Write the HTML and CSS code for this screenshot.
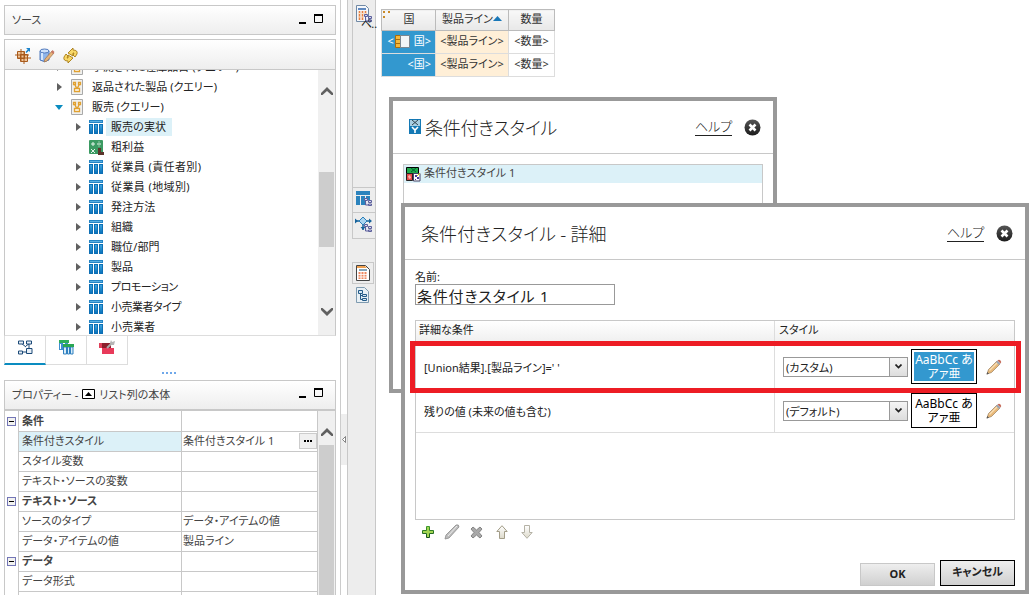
FILE: index.html
```html
<!DOCTYPE html>
<html lang="ja">
<head>
    <meta charset="utf-8">
    <title>条件付きスタイル</title>
    <link rel="stylesheet" href="styles.css">
</head>
<body>
    <!-- shared icons -->
    <svg class="defs" width="0" height="0">
        <defs>
            <linearGradient id="gBlue" x1="0" y1="0" x2="0" y2="1">
                <stop offset="0" stop-color="#3fa4dc"/><stop offset="1" stop-color="#0873bd"/>
            </linearGradient>
            <linearGradient id="gDark" x1="0" y1="0" x2="0" y2="1">
                <stop offset="0" stop-color="#555"/><stop offset="1" stop-color="#1c1c1c"/>
            </linearGradient>
            <linearGradient id="gGreen" x1="0" y1="0" x2="0" y2="1">
                <stop offset="0" stop-color="#3f9a2f"/><stop offset="1" stop-color="#14501c"/>
            </linearGradient>
            <linearGradient id="gArrow" x1="0" y1="0" x2="0" y2="1">
                <stop offset="0" stop-color="#fff"/><stop offset="1" stop-color="#dcd9ca"/>
            </linearGradient>
            <symbol id="table" viewBox="0 0 14 14">
                <rect x=".5" y=".5" width="13" height="2" fill="#5aaee0" stroke="#2385c6"/>
                <path d="M0 4h4v10H0zM5 4h4v10H5zM10 4h4v10h-4z" fill="#0e6fb4"/>
                <path d="M1 5h2v8H1zM6 5h2v8H6zM11 5h2v8h-2z" fill="url(#gBlue)"/>
            </symbol>
            <symbol id="query" viewBox="0 0 12 16">
                <path d="M.5.500h11v15H.5z" fill="#f0f0ee" stroke="#a9a9a9"/>
                <path d="M4 6l1.500 3M8 6L6.500 9" stroke="#e0a030" stroke-width="1.500"/>
                <path d="M2.500 3.500h2v2h-2zM7.500 3.500h2v2h-2zM3.500 9.500h5v3h-5z" fill="#fff" stroke="#e0a030" stroke-width="1.300"/>
            </symbol>
            <symbol id="closeIcon" viewBox="0 0 17 17">
                <circle cx="8.500" cy="8.500" r="8" fill="url(#gDark)"/>
                <path d="M5.500 5.500l6 6M11.500 5.500l-6 6" stroke="#fff" stroke-width="2.600"/>
            </symbol>
            <symbol id="pencil" viewBox="0 0 16 16">
                <path d="M1 15l1.500-4.500L11 2l3 3-8.500 8.500z" fill="#e8b878" stroke="#9a7f60" stroke-width=".7"/>
                <path d="M3.500 11.500L12 3" stroke="#f8dfb5" stroke-width="1.200"/>
                <path d="M10 3l1.500-1.500 3 3L13 6z" fill="#9aa7b5"/>
                <path d="M11.500 1.500Q13 0 14.500 1.500t0 3z" fill="#c66a58"/>
                <path d="M.5 15.500l.8-2.500 1.700 1.700z" fill="#555"/>
            </symbol>
            <symbol id="minmax" viewBox="0 0 25 11">
                <path d="M0 8h7v2H0z"/>
                <path d="M15.500.500h8v8h-8z" fill="none" stroke="#000"/>
                <path d="M15 0h9v2h-9z"/>
            </symbol>
            <symbol id="chevUp" viewBox="0 0 12 8">
                <path d="M0 6l6-6 6 6v2h-1.500L6 4 1.500 8H0z" fill="#606060"/>
            </symbol>
            <symbol id="minus" viewBox="0 0 9 9">
                <rect x=".5" y=".5" width="8" height="8" fill="#f2f2f0" stroke="#7376b6"/>
                <path d="M2 4.500h5" stroke="#000"/>
            </symbol>
            <symbol id="subTree" viewBox="0 0 8 8">
                <path d="M.5.500h3v2h-3zM4.500 2.500h3v2h-3zM4.500 6h3v1.500h-3zM1.500 3v4h3" fill="#d9d9f2" stroke="#5b5f9b"/>
            </symbol>
        </defs>
    </svg>

    <div class="app">
        <div class="side">
            <div class="bar">
                <span class="bar-title src">ソース</span>
                <svg class="minmax" width="25" height="11"><use href="#minmax"/></svg>
            </div>

            <div class="source">
                <div class="tools">
                    <svg width="16" height="16" viewBox="0 0 16 16">
                        <path d="M2.500 3.500h7v7h-7zM5.500 6.500h7v7h-7z" fill="#f0c79c" stroke="#a85a1c"/>
                        <path d="M0 7h14M6 1v12M3 10h13M9 4v12" stroke="#a85a1c" fill="none"/>
                        <path d="M11 0h4v4l-1.200-1.200L11.500 5l-1-1 2.200-2.400z" fill="#1d84cb"/>
                    </svg>
                    <svg width="16" height="16" viewBox="0 0 16 16">
                        <path d="M1 3v9q4 3 9 0V3z" fill="#8fb5ea" stroke="#4f79bd"/>
                        <ellipse cx="5.500" cy="3" rx="4.500" ry="2" fill="#cfe2fb" stroke="#4f79bd"/>
                        <path d="M3 5v7" stroke="#d5e6fb" stroke-width="2"/>
                        <path d="M5 14l1-3 7-8 2 2-7 8z" fill="#e6b47a" stroke="#9b704a" stroke-width=".7"/>
                        <path d="M12 4l1.500-2 2 2L14 6z" fill="#c97866"/>
                    </svg>
                    <svg width="16" height="16" viewBox="0 0 16 16">
                        <path d="M5 5l5-5v2q5 0 4 4l-2 3-2-2 1-2h-1v3z" fill="#f8d867" stroke="#a87c14" stroke-width=".9"/>
                        <path d="M10 10l-5 5v-2q-5 0-4-4l2-3 2 2-1 2h1V7z" fill="#f8d867" stroke="#a87c14" stroke-width=".9"/>
                    </svg>
                </div>
                <div class="tree-wrap">
                    <ul class="tree">
                        <li class="q"><i class="arrow"></i><svg width="12" height="16"><use href="#query"/></svg><span>予測された在庫品目 (クエリー)</span></li>
                        <li class="q"><i class="arrow"></i><svg width="12" height="16"><use href="#query"/></svg><span>返品された製品 (クエリー)</span></li>
                        <li class="q"><i class="arrow open"></i><svg width="12" height="16"><use href="#query"/></svg><span>販売 (クエリー)</span></li>
                        <li><i class="arrow"></i><svg width="14" height="14"><use href="#table"/></svg><span class="selected">販売の実状</span></li>
                        <li><i class="arrow none"></i><svg class="calc" width="15" height="15" viewBox="0 0 15 15">
                            <rect x="0" y="0" width="14" height="14" rx="1" fill="#3b9a62"/>
                            <path d="M2 4h4M4 2v4M8 4h4M2 9l4 4M6 9l-4 4M10 1.500v1M10 5.500v1M9 10h3" stroke="#e4f5ea" fill="none"/>
                            <path d="M9 8h3v4h3v3H9z" fill="#5c352b"/></svg><span>粗利益</span></li>
                        <li><i class="arrow"></i><svg width="14" height="14"><use href="#table"/></svg><span class="wide">従業員 (責任者別)</span></li>
                        <li><i class="arrow"></i><svg width="14" height="14"><use href="#table"/></svg><span class="wide">従業員 (地域別)</span></li>
                        <li><i class="arrow"></i><svg width="14" height="14"><use href="#table"/></svg><span>発注方法</span></li>
                        <li><i class="arrow"></i><svg width="14" height="14"><use href="#table"/></svg><span>組織</span></li>
                        <li><i class="arrow"></i><svg width="14" height="14"><use href="#table"/></svg><span>職位/部門</span></li>
                        <li><i class="arrow"></i><svg width="14" height="14"><use href="#table"/></svg><span>製品</span></li>
                        <li><i class="arrow"></i><svg width="14" height="14"><use href="#table"/></svg><span class="narrow">プロモーション</span></li>
                        <li><i class="arrow"></i><svg width="14" height="14"><use href="#table"/></svg><span class="narrow">小売業者タイプ</span></li>
                        <li><i class="arrow"></i><svg width="14" height="14"><use href="#table"/></svg><span>小売業者</span></li>
                    </ul>
                    <div class="scroll">
                        <svg width="12" height="8"><use href="#chevUp"/></svg>
                        <div class="thumb"></div>
                        <svg class="down" width="12" height="8"><use href="#chevUp"/></svg>
                    </div>
                </div>
            </div>

            <div class="tabs">
                <div class="tab active">
                    <svg width="15" height="15" viewBox="0 0 15 15" fill="#e6eef6" stroke="#1c4a78">
                        <path d="M3 3L8 7M11 3v5M8 6l4-3M5 12h3" fill="none"/>
                        <path d="M.5 1h5v3h-5zM8.500 1h5v3h-5zM8.500 8.500h5.500v5H8.500zM.5 11h4v3h-4z"/>
                    </svg>
                </div>
                <div class="tab">
                    <svg width="15" height="15" viewBox="0 0 15 15">
                        <path d="M0 3h4v7H0zM6 3h3v7H6z" fill="#3f8fd0"/>
                        <path d="M1 4h1v5H1z" fill="#fff"/>
                        <path d="M0 0h10v3H0z" fill="#2eae5b"/>
                        <path d="M4.500 7v7h3V7zM8.500 7h2v7h-2zM11.500 7h2.500v7h-2.500z" fill="#d9ecf8" stroke="#2f80c0"/>
                        <path d="M4 4h11v3H4z" fill="#2aa653"/>
                    </svg>
                </div>
                <div class="tab">
                    <svg width="16" height="15" viewBox="0 0 16 15">
                        <path d="M0 3h12v5H0z" fill="#8c1f2c"/><path d="M0 3h3v5H0z" fill="#e0405a"/>
                        <path d="M3 8h12v6H3z" fill="#e83a5a"/>
                        <path d="M8 8l5-5" stroke="#aaa" stroke-width="2"/>
                        <path d="M12 0l1 2 3-1-1 4h-3l-1-2z" fill="#b5b5b5"/>
                    </svg>
                </div>
            </div>

            <div class="dots"><i></i><i></i><i></i><i></i></div>

            <div class="bar prop-bar">
                <span class="bar-title">プロパティー - <svg width="13" height="10" viewBox="0 0 13 10"><path d="M.5.500h12v9H.5z" fill="#fff" stroke="#000"/><path d="M3 7h7L6.500 3z"/></svg> リスト列の本体</span>
                <svg class="minmax" width="25" height="11"><use href="#minmax"/></svg>
            </div>
            <div class="props">
                <div class="prop-rows">
                    <div class="prop group"><span class="toggle"><svg width="9" height="9"><use href="#minus"/></svg></span><span class="name">条件</span><span class="value"></span></div>
                    <div class="prop current"><span class="toggle"></span><span class="name">条件付きスタイル</span><span class="value">条件付きスタイル 1<button class="more"><i></i><i></i><i></i></button></span></div>
                    <div class="prop"><span class="toggle"></span><span class="name">スタイル変数</span><span class="value"></span></div>
                    <div class="prop"><span class="toggle"></span><span class="name">テキスト・ソースの変数</span><span class="value"></span></div>
                    <div class="prop group"><span class="toggle"><svg width="9" height="9"><use href="#minus"/></svg></span><span class="name">テキスト・ソース</span><span class="value"></span></div>
                    <div class="prop"><span class="toggle"></span><span class="name">ソースのタイプ</span><span class="value">データ・アイテムの値</span></div>
                    <div class="prop"><span class="toggle"></span><span class="name">データ・アイテムの値</span><span class="value">製品ライン</span></div>
                    <div class="prop group"><span class="toggle"><svg width="9" height="9"><use href="#minus"/></svg></span><span class="name">データ</span><span class="value"></span></div>
                    <div class="prop"><span class="toggle"></span><span class="name">データ形式</span><span class="value"></span></div>
                    <div class="prop"><span class="toggle"></span><span class="name"></span><span class="value"></span></div>
                </div>
                <div class="scroll">
                    <svg width="12" height="8"><use href="#chevUp"/></svg>
                    <div class="thumb"></div>
                </div>
            </div>
        </div>

        <div class="splitter">
            <div class="handle"><svg width="4" height="7" viewBox="0 0 4 7"><path d="M3.500.500v6L.5 3.500z" fill="#fff" stroke="#666" stroke-width=".8"/></svg></div>
        </div>

        <div class="strip">
            <div class="strip-top">
                <svg width="16" height="18" viewBox="0 0 16 18">
                    <path d="M.5.500h9l3 3v13H.5z" fill="#f5f7fa" stroke="#7089a5"/>
                    <path d="M2 4h8" stroke="#6089c0" stroke-width="2"/>
                    <path d="M3.500 6v9M6.500 6v9M9.500 6v4" stroke="#e88040" stroke-width="1.600"/>
                    <path d="M2 8.500h8M2 12h6" stroke="#f8e0c8"/>
                    <use href="#subTree" x="8" y="9" width="8" height="8"/>
                </svg>
                <span>ペ‥</span>
            </div>
            <div class="strip-btn">
                <svg width="16" height="16" viewBox="0 0 16 16">
                    <path d="M0 0h14v4H0zM0 5h4v9H0zM5 5h4v9H5zM10 5h4v4h-4z" fill="#2b83bd"/>
                    <use href="#subTree" x="8" y="7" width="8" height="8"/>
                </svg>
            </div>
            <div class="strip-btn">
                <svg width="18" height="16" viewBox="0 0 18 16">
                    <path d="M0 5h16M8 8v6" stroke="#18649c" stroke-width="1.500"/>
                    <path d="M0 2.500v5L3 5zM14 2.500L17 5l-3 2.500zM5.500 11h5L8 14z" fill="#18649c"/>
                    <path d="M8 1l4 4-4 4-4-4z" fill="#a9d4f0" stroke="#2b7eb8"/>
                    <use href="#subTree" x="9" y="8" width="8" height="8"/>
                </svg>
            </div>
            <div class="strip-btn page">
                <svg width="14" height="16" viewBox="0 0 14 16">
                    <path d="M.5.500h9l4 4v11H.5z" fill="#fff" stroke="#444"/>
                    <path d="M1 1h8l2 2H1z" fill="#f0a050"/>
                    <path d="M3 5h8" stroke="#6089a0" stroke-width="1.500"/>
                    <path d="M3.500 7v7M6.500 7v7M9.500 7v7" stroke="#ee8860" stroke-width="2"/>
                    <path d="M2 9.500h9M2 12h9" stroke="#fff" stroke-width=".8"/>
                </svg>
            </div>
            <svg class="strip-icon" width="13" height="16" viewBox="0 0 13 16">
                <path d="M.5.500h8l4 4v11H.5z" fill="#e8f0f5" stroke="#7f9bb0"/>
                <path d="M2.500 3.500h4v3h-4zM6.500 7.500h4v2h-4zM6.500 11.500h4v2h-4zM4.500 7v5.500h2M4.500 8.500h2" fill="#d5e6f2" stroke="#245b88"/>
            </svg>
        </div>

        <div class="work">
            <table class="report">
                <tr>
                    <th class="c1"><svg class="grip" width="8" height="8" viewBox="0 0 8 8"><path d="M0 0h2v2H0zM5 0h2v2H5zM0 5h2v2H0z" fill="#c98a28"/></svg>国</th>
                    <th class="c2">製品ライン<svg class="sort" width="9" height="5" viewBox="0 0 9 5"><path d="M0 5L4.500 0 9 5z" fill="#1877b8"/></svg></th>
                    <th class="c3">数量</th>
                </tr>
                <tr>
                    <td class="blue">&lt;<svg class="col-icon" width="15" height="13" viewBox="0 0 15 13"><path d="M.5.500h5v12h-5z" fill="#f5b83c" stroke="#a96c0c"/><path d="M5.500.500h9v12h-9z" fill="#f2f5f7" stroke="#7a8690"/><path d="M1 4.500h4M1 8.500h4" stroke="#a96c0c"/></svg>国&gt;</td>
                    <td class="cream">&lt;製品ライン&gt;</td>
                    <td>&lt;数量&gt;</td>
                </tr>
                <tr>
                    <td class="blue">&lt;国&gt;</td>
                    <td class="cream">&lt;製品ライン&gt;</td>
                    <td>&lt;数量&gt;</td>
                </tr>
            </table>
        </div>
    </div>

    <div class="dialog styles-dialog">
        <div class="dialog-head">
            <svg class="title-icon" width="12" height="15" viewBox="0 0 12 15">
                <path d="M0 0h12v15H0z" fill="#1479b5"/><path d="M1 1h10v6H1z" fill="#a9cfe2"/>
                <path d="M3 1l6 5M9 1L3 6" stroke="#34454f" fill="none"/>
                <path d="M3 8l3 3 3-3M6 11v3" stroke="#fff" stroke-width="1.600" fill="none"/>
            </svg>
            <h2>条件付きスタイル</h2>
            <a class="help">ヘルプ</a>
            <svg width="17" height="17"><use href="#closeIcon"/></svg>
        </div>
        <div class="style-list">
            <div class="style-item">
                <svg width="15" height="15" viewBox="0 0 15 15">
                    <path d="M.5.500h12v6H.5z" fill="#1faa4a" stroke="#000"/>
                    <path d="M5 1l5 4M10 1L5 5" stroke="#063"/>
                    <path d="M.5 6.500h6v7h-6z" fill="#e54848" stroke="#222"/>
                    <path d="M2 9l2-1 1 3-2 1z" fill="#ffb0a8"/>
                    <path d="M7.500 6.500h6.500v7.500H7.500z" fill="#fff" stroke="#444466"/>
                    <path d="M9 8h2v2H9zM11 10h2v2h-2zM9 12h1v1H9z" fill="#4a3d9a"/>
                    <path d="M11 9l3-3" stroke="#cc0"/>
                </svg>
                <span>条件付きスタイル 1</span>
            </div>
        </div>
    </div>

    <div class="dialog detail-dialog">
        <div class="dialog-head">
            <h2>条件付きスタイル - 詳細</h2>
            <a class="help">ヘルプ</a>
            <svg width="17" height="17"><use href="#closeIcon"/></svg>
        </div>
        <div class="dialog-body">
            <label for="name">名前:</label>
            <input type="text" id="name" value="条件付きスタイル 1">

            <div class="grid">
                <div class="grid-row grid-head">
                    <div class="cond">詳細な条件</div>
                    <div class="style">スタイル</div>
                </div>
                <div class="grid-row">
                    <div class="cond union">[Union結果].[製品ライン]=' '</div>
                    <div class="style">
                        <div class="select"><span>(カスタム)</span><b><svg width="7" height="5" viewBox="0 0 7 5"><path d="M.5.500l3 3 3-3" fill="none" stroke="#222" stroke-width="1.700"/></svg></b></div>
                        <div class="preview"><div class="fill">AaBbCc あ<br>アァ亜</div></div>
                        <svg width="16" height="16"><use href="#pencil"/></svg>
                    </div>
                </div>
                <div class="grid-row">
                    <div class="cond">残りの値 (未来の値も含む)</div>
                    <div class="style">
                        <div class="select"><span>(デフォルト)</span><b><svg width="7" height="5" viewBox="0 0 7 5"><path d="M.5.500l3 3 3-3" fill="none" stroke="#222" stroke-width="1.700"/></svg></b></div>
                        <div class="preview"><div>AaBbCc あ<br>アァ亜</div></div>
                        <svg width="16" height="16"><use href="#pencil"/></svg>
                    </div>
                </div>
            </div>

            <div class="grid-tools">
                <svg width="12" height="12" viewBox="0 0 12 12"><path d="M4.500.500h3v4h4v3h-4v4h-3v-4h-4v-3h4z" fill="#a3d552" stroke="url(#gGreen)"/></svg>
                <svg width="16" height="16" viewBox="0 0 16 16"><path d="M1 15l1-4L12 1q3-1 3 2L5 14z" fill="#bdbdbd" stroke="#8c8c8c" stroke-width=".8"/><path d="M4 12l9-10" stroke="#ececec"/></svg>
                <svg width="13" height="13" viewBox="0 0 13 13"><path d="M1 3l2-2 3.500 3L10 1l2 2-3 3.500L12 10l-2 2-3.500-3L3 12l-2-2 3-3.500z" fill="#a8a8a8" stroke="#858585"/></svg>
                <svg class="up" width="12" height="14" viewBox="0 0 12 14"><path d="M6 .7l5.200 5.800H8.500v7h-5v-7H.8z" fill="url(#gArrow)" stroke="#a39d88"/></svg>
                <svg class="up" width="12" height="14" viewBox="0 0 12 14"><path d="M6 13.300l5.200-5.800H8.500v-7h-5v7H.8z" fill="url(#gArrow)" stroke="#b5b2a6"/></svg>
            </div>

            <div class="buttons">
                <button class="btn">OK</button>
                <button class="btn cancel">キャンセル</button>
            </div>
        </div>
    </div>

    <div class="highlight"></div>
</body>
</html>
```
FILE: styles.css
```css
* {
    padding: 0;
    margin: 0;
    box-sizing: border-box;
}

body {
    width: 1031px;
    height: 595px;
    overflow: hidden;
    background-color: #fff;
    font-family: "Noto Sans", "Noto Sans CJK JP", sans-serif;
    font-size: 11px;
    font-feature-settings: "palt";
    color: #222;
}

svg {
    display: block;
    flex: none;
}

.defs {
    position: absolute;
}

.app {
    display: flex;
    height: 595px;
    white-space: nowrap;
}

/* left side */
.side {
    width: 341px;
    border-right: 1px solid #ccc;
    padding: 5px 4px 0;
    display: flex;
    flex-direction: column;
}

.bar {
    width: 332px;
    height: 30px;
    flex: none;
    border: 1px solid #c8c8c8;
    background: linear-gradient(#fff, #eee);
    display: flex;
    align-items: center;
    justify-content: space-between;
    padding: 0 11px 2px 7px;
    color: #444;
}

.bar-title {
    display: flex;
    align-items: center;
    gap: 4px;
}

.source {
    width: 332px;
    height: 297px;
    flex: none;
    margin-top: 4px;
    border: 1px solid #c8c8c8;
    border-bottom-color: #ddd;
}

.tools {
    height: 30px;
    border-bottom: 1px solid #c8c8c8;
    background: linear-gradient(#fff, #eee);
    display: flex;
    gap: 8px;
    padding: 8px 10px;
}

.tree-wrap {
    height: 265px;
    display: flex;
    justify-content: space-between;
    overflow: hidden;
}

.tree {
    list-style: none;
    margin-top: -13px;
}

.tree li {
    height: 20px;
    display: flex;
    align-items: center;
    padding-left: 71px;
}

.tree li.q {
    padding-left: 52px;
}

.tree span {
    margin-left: 3px;
    padding: 0 6px 0 5px;
    line-height: 18px;
    letter-spacing: .1px;
}

.tree .q span {
    margin-left: 4px;
    letter-spacing: 0;
}

.tree .wide {
    letter-spacing: .4px;
}

.tree .narrow {
    letter-spacing: -.5px;
}

.tree .selected {
    background-color: #dcf1f8;
}

.calc {
    margin-right: -1px;
}

.arrow {
    border: 4px solid transparent;
    border-left: 5px solid #606060;
    border-right: 0;
    margin-right: 8px;
}

.q .arrow {
    margin-right: 9px;
}

.arrow.open {
    border: 4px solid transparent;
    border-top: 5px solid #0a8cc0;
    border-bottom: 0;
    margin: 0 8px 0 -2px;
}

.arrow.none {
    border-color: transparent;
}

.scroll {
    width: 17px;
    flex: none;
    background-color: #f0f0f0;
    display: flex;
    flex-direction: column;
    align-items: center;
    padding-top: 17px;
}

.scroll .thumb {
    width: 15px;
    height: 75px;
    margin: 77px 0 61px;
    background-color: #cdcdcd;
}

.scroll .down {
    transform: rotate(180deg);
}

.tabs {
    display: flex;
    height: 29px;
    flex: none;
}

.tab {
    width: 41px;
    height: 29px;
    border-right: 1px solid #ddd;
    border-bottom: 1px solid #ddd;
    display: flex;
    justify-content: center;
    padding-top: 4px;
}

.tab.active {
    width: 42px;
    border-left: 1px solid #ddd;
    border-bottom: 2px solid #0a8cc0;
}

.dots {
    display: flex;
    flex: none;
    justify-content: center;
    gap: 2px;
    height: 15px;
    padding: 7px 2px 0 0;
}

.dots i {
    width: 2px;
    height: 2px;
    background-color: #6fa8ea;
}

.prop-bar {
    height: 31px;
    border-bottom-width: 2px;
    padding-bottom: 3px;
}

.props {
    display: flex;
    width: 332px;
    height: 184px;
    border: 1px solid #c8c8c8;
    border-width: 0 1px;
}

.prop-rows {
    width: 313px;
}

.prop {
    display: flex;
    height: 20px;
    line-height: 17px;
    color: #444;
}

.toggle {
    width: 13px;
    padding: 5px 0 0 2px;
}

.name,
.value {
    border: 1px solid #c8c8c8;
    border-width: 0 0 1px 1px;
    padding-left: 3px;
}

.name {
    width: 163px;
}

.value {
    width: 137px;
    padding-left: 1px;
    border-right-width: 1px;
    display: flex;
    justify-content: space-between;
}

.prop:first-child {
    height: 21px;
    line-height: 19px;
}

.prop:first-child .toggle {
    padding-top: 6px;
}

.group {
    font-weight: bold;
}

.current .name {
    background-color: #dcf1f8;
}

.more {
    width: 18px;
    height: 16px;
    margin-top: 1px;
    border: 1px solid #ccc;
    background-color: #f0f0f0;
    display: flex;
    justify-content: center;
    align-items: center;
    gap: 1px;
}

.more i {
    width: 2px;
    height: 2px;
    background-color: #000;
}

.props .thumb {
    height: 150px;
    margin: 9px 0 0;
}

.splitter {
    width: 6px;
    padding-top: 414px;
}

.handle {
    height: 51px;
    background-color: #eee;
    display: flex;
    align-items: center;
    justify-content: center;
}

/* page explorer strip */
.strip {
    width: 29px;
    border: 1px solid #c8c8c8;
    border-width: 0 1px;
    background-color: #ededed;
    padding-left: 4px;
}

.strip-top {
    height: 187px;
    border-left: 1px solid #c8c8c8;
    padding: 5px 0 0 3px;
}

.strip-top span {
    display: block;
    width: 15px;
    margin: -7px 0 0 5px;
    line-height: 16px;
    letter-spacing: -1px;
}

.strip-btn {
    height: 26px;
    border: 1px solid #c8c8c8;
    border-right: 0;
    padding: 3px 0 0 3px;
}

.strip-btn + .strip-btn {
    border-top: 0;
    height: 26px;
    padding-left: 2px;
}

.strip-btn.page,
.strip-btn + .strip-btn.page {
    width: 22px;
    height: 22px;
    margin-top: 23px;
    border: 1px solid #c8c8c8;
    padding: 2px 0 0 3px;
}

.strip-icon {
    margin: 3px 0 0 4px;
}

/* report */
.work {
    flex: 1;
    padding: 9px 0 0 5px;
}

.report {
    border-collapse: collapse;
    table-layout: fixed;
    width: 174px;
}

.report th,
.report td {
    border: 1px solid #ddd;
    height: 23px;
    font-weight: normal;
    text-align: center;
    vertical-align: middle;
    line-height: 14px;
    color: #333;
    padding-bottom: 2px;
}

.report th {
    height: 21px;
    border-color: #bbb;
    background: linear-gradient(#f8f8f8, #e8e8e8);
}

.report svg {
    display: inline-block;
    vertical-align: middle;
}

.report .grip {
    float: left;
    margin: -1px -8px 0 1px;
}

.report .sort {
    vertical-align: 2px;
}

.report .col-icon {
    margin: 0 4px 0 1px;
}

.report .c1 {
    width: 54px;
}

.report .c2 {
    width: 73px;
}

.report .c3 {
    width: 46px;
}

.report .blue {
    background-color: #3398cf;
    color: #fff;
    text-align: right;
    padding-right: 4px;
}

.report .cream {
    background: repeating-conic-gradient(#fff 0 25%, #ffdfae 0 50%) 0 0 / 2px 2px;
}

/* dialogs */
.dialog {
    position: absolute;
    border: 4px solid #999;
    background-color: #fff;
    white-space: nowrap;
}

.styles-dialog {
    left: 389px;
    top: 97px;
    width: 388px;
    height: 296px;
}

.detail-dialog {
    left: 401px;
    top: 203px;
    width: 628px;
    height: 391px;
}

.dialog-head {
    height: 53px;
    border-bottom: 1px solid #c8c8c8;
    display: flex;
    align-items: center;
    padding: 0 12px 0 16px;
}

.dialog-head h2 {
    flex: 1;
    font-size: 18px;
    font-weight: 300;
    font-family: "Noto Sans CJK JP", sans-serif;
    letter-spacing: -.3px;
}

.detail-dialog h2 {
    letter-spacing: .1px;
}

.title-icon {
    margin: -2px 4px 0 0;
}

.help {
    width: 37px;
    height: 18px;
    line-height: 17px;
    font-size: 13px;
    font-weight: 300;
    border-bottom: 1px solid #222;
    margin-right: 12px;
}

.style-list {
    width: 360px;
    height: 214px;
    margin: 10px;
    border: 1px solid #c8c8c8;
}

.style-item {
    height: 18px;
    display: flex;
    align-items: center;
    gap: 3px;
    padding-left: 2px;
    background-color: #dcf1f8;
    color: #444;
}

.style-item span {
    line-height: 16px;
    padding-bottom: 2px;
}

.dialog-body {
    padding: 10px 10px 0;
}

.dialog-body label {
    display: block;
    height: 14px;
    line-height: 14px;
}

.dialog-body input {
    display: block;
    width: 200px;
    height: 21px;
    border: 1px solid #999;
    padding: 2px 1px 0;
    font: 15px "Noto Sans", "Noto Sans CJK JP", sans-serif;
    font-feature-settings: "palt";
    letter-spacing: .8px;
    color: #222;
}

.grid {
    width: 600px;
    height: 200px;
    margin-top: 15px;
    border: 1px solid #c8c8c8;
}

.grid-row {
    display: flex;
    height: 44px;
    border-bottom: 1px solid #ddd;
}

.grid-row:nth-child(2) {
    height: 47px;
}

.grid-row:nth-child(2) > div {
    padding-top: 3px;
}

.cond {
    width: 358px;
    padding-left: 8px;
    display: flex;
    align-items: center;
}

.style {
    flex: 1;
    border-left: 1px solid #ddd;
    display: flex;
    align-items: center;
    padding-left: 8px;
}

.grid .grid-head {
    height: 21px;
    background: linear-gradient(#fff, #f0f0f0);
    line-height: 17px;
}

.grid-head .cond {
    padding: 0 0 3px 3px;
}

.grid-head .style {
    padding: 0 0 3px 4px;
}

.select {
    width: 125px;
    height: 20px;
    border: 1px solid #999;
    display: flex;
    justify-content: space-between;
    align-items: center;
    padding-left: 2px;
}

.select b {
    width: 18px;
    height: 18px;
    border-left: 1px solid #999;
    background: linear-gradient(#f5f5f5, #ddd);
    display: flex;
    align-items: center;
    justify-content: center;
}

.preview {
    width: 66px;
    height: 35px;
    margin: 0 9px 0 3px;
    border: 1px solid #000;
    padding: 2px;
    font-size: 12px;
    line-height: 14px;
    text-align: center;
    color: #000;
}

.preview div {
    height: 29px;
    padding-top: 1px;
}

.preview .fill {
    background-color: #3398cf;
    color: #fff;
}

.grid-tools {
    height: 24px;
    display: flex;
    align-items: center;
    gap: 10px;
    padding-left: 7px;
}

.grid-tools .up {
    margin-left: 3px;
}

.buttons {
    display: flex;
    justify-content: flex-end;
    align-items: flex-end;
    gap: 5px;
    height: 42px;
}

.btn {
    width: 75px;
    height: 23px;
    border: 1px solid #c8c8c8;
    background: linear-gradient(#eee, #d0d0d0);
    padding-bottom: 2px;
    font: bold 11px "Noto Sans", "Noto Sans CJK JP", sans-serif;
    font-feature-settings: "palt";
    color: #222;
}

.cancel {
    height: 26px;
    padding-bottom: 5px;
    border-color: #000;
}

/* red frame over the condition row */
.highlight {
    position: absolute;
    left: 410px;
    top: 341px;
    width: 611px;
    height: 52px;
    border: 5px solid #ed1c24;
}
```
